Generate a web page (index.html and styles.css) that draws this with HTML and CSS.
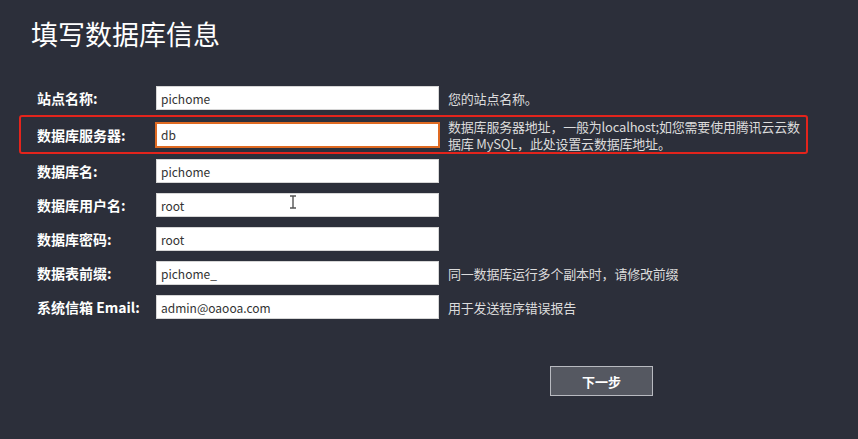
FILE: index.html
```html
<!DOCTYPE html>
<html lang="zh-CN">

<head>
    <meta charset="UTF-8">
    <meta name="viewport" content="width=device-width, initial-scale=1.0">
    <title>填写数据库信息</title>
    <link rel="stylesheet" href="styles.css">
</head>

<body>

    <h1 class="title">填写数据库信息</h1>

    <form class="setup-form">
        <div class="row">
            <label for="sitename">站点名称:</label>
            <input id="sitename" type="text" value="pichome">
            <span class="tip">您的站点名称。</span>
        </div>
        <div class="row row-warn">
            <label for="dbhost">数据库服务器:</label>
            <input id="dbhost" class="focused" type="text" value="db">
            <span class="tip">数据库服务器地址，一般为localhost;如您需要使用腾讯云云数据库 MySQL，此处设置云数据库地址。</span>
        </div>
        <div class="row">
            <label for="dbname">数据库名:</label>
            <input id="dbname" type="text" value="pichome">
            <span class="tip"></span>
        </div>
        <div class="row">
            <label for="dbuser">数据库用户名:</label>
            <input id="dbuser" type="text" value="root">
            <span class="tip"></span>
        </div>
        <div class="row">
            <label for="dbpw">数据库密码:</label>
            <input id="dbpw" type="text" value="root">
            <span class="tip"></span>
        </div>
        <div class="row">
            <label for="tablepre">数据表前缀:</label>
            <input id="tablepre" type="text" value="pichome_">
            <span class="tip">同一数据库运行多个副本时，请修改前缀</span>
        </div>
        <div class="row">
            <label for="email">系统信箱 Email:</label>
            <input id="email" type="text" value="admin@oaooa.com">
            <span class="tip">用于发送程序错误报告</span>
        </div>

        <div class="actions">
            <button type="button" class="btn-next">下一步</button>
        </div>
    </form>

    <!-- mouse cursor over the user name field -->
    <svg class="cursor" width="8" height="14" viewBox="0 0 8 14">
        <path d="M1 1h6M1 13h6M4 1v12" stroke="#555" stroke-width="1.4" fill="none"/>
    </svg>

</body>

</html>
```

FILE: styles.css
```css
/* General */
* {
    margin: 0;
    padding: 0;
    box-sizing: border-box;
}

body {
    background-color: #2c2f3a;
    font-family: "Noto Sans CJK SC", "Noto Sans", sans-serif;
    color: #fff;
    width: 858px;
    height: 439px;
    overflow: hidden;
    position: relative;
}

/* Heading */
.title {
    font-size: 27px;
    font-weight: normal;
    line-height: 34px;
    margin: 17px 0 0 31px;
    height: 64px;
}

/* Form rows */
.setup-form {
    display: flex;
    flex-direction: column;
}

.row {
    display: grid;
    grid-template-columns: 110px 283px 356px;
    column-gap: 9px;
    align-items: center;
    margin-left: 19px;
    width: 789px;
    height: 34px;
    padding-left: 16px;
    border: 2px solid transparent;
    border-radius: 3px;
}

.row-warn {
    height: 39px;
    border-color: #e3241c;
}

label {
    font-size: 14px;
    font-weight: bold;
    color: #fff;
    white-space: nowrap;
}

input {
    height: 24px;
    border: 1px solid #d6d6d6;
    background: #fff;
    color: #333;
    font-family: inherit;
    font-size: 12px;
    padding: 0 4px;
    outline: none;
}

input.focused {
    border-color: #df6a22;
    box-shadow: 0 0 0 1px #df6a22;
}

.tip {
    font-size: 13px;
    line-height: 17px;
    letter-spacing: -0.2px;
    color: #dcdcdc;
}

/* Button */
.actions {
    padding: 42px 0 0 550px;
}

.btn-next {
    width: 103px;
    height: 30px;
    background-color: #555861;
    border: 1px solid #b8bac0;
    color: #fff;
    font-family: inherit;
    font-size: 13px;
    font-weight: bold;
    cursor: pointer;
}

.btn-next:hover {
    background-color: #61646d;
}

/* Cursor */
.cursor {
    position: absolute;
    left: 289px;
    top: 195px;
}
```
